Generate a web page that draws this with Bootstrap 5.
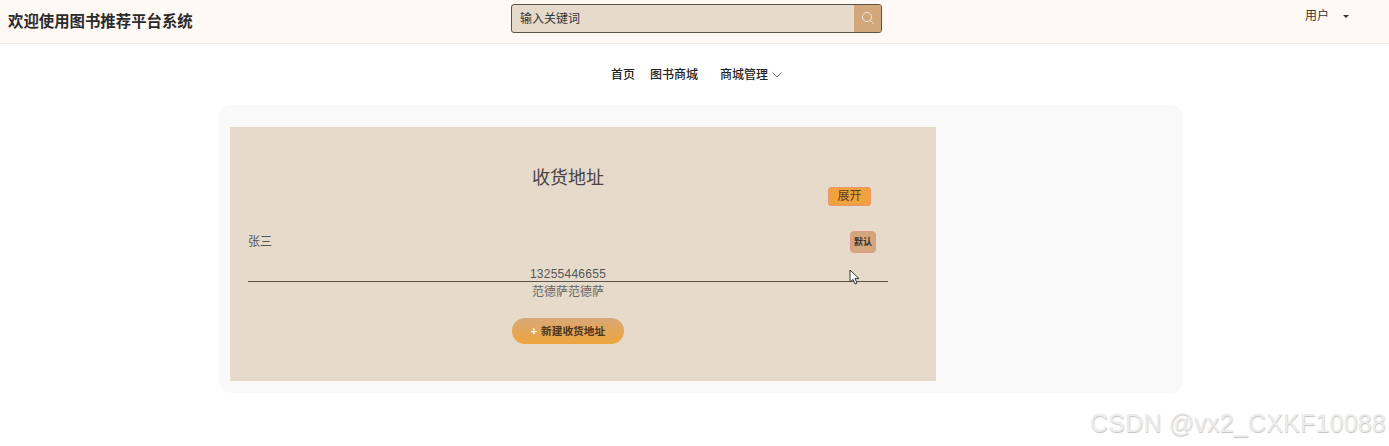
<!DOCTYPE html>
<html lang="zh-CN">
<head>
    <meta charset="UTF-8">
    <meta name="viewport" content="width=device-width, initial-scale=1.0">
    <title>图书推荐平台</title>
    <link href="https://cdn.jsdelivr.net/npm/bootstrap@5.3.0/dist/css/bootstrap.min.css" rel="stylesheet">
    <style>
        html, body { height: 446px; overflow: hidden; }
        body { font-family: "Liberation Sans", "Noto Sans CJK SC", sans-serif; background: #fff; color: #333; position: relative; }
        .top-bar { height: 44px; background: #fff9f6; border-bottom: 1px solid #e9e9e9; padding: 0 8px; }
        .site-title { font-size: 15.4px; font-weight: 700; width: 503px; color: #2b2b2b; }
        .search-box { width: 371px; height: 29px; margin-top: -7px; border: 1px solid #5d5348; border-radius: 3px; background: #e6dacb; overflow: hidden; }
        .search-text { font-size: 12px; padding: 2px 0 0 8px; color: #333; }
        .search-btn { width: 27px; background: #d3a77c; }
        .user-menu { margin-left: 423px; margin-top: -11px; font-size: 12px; color: #333; }
        .user-caret { border-top: 3px solid #333; border-left: 3px solid transparent; border-right: 3px solid transparent; margin-left: 14px; margin-top: 1px; }
        .main-nav { height: 61px; font-size: 12px; color: #222; padding-left: 4px; gap: 15px; }
        .nav-entry { font-weight: 500; }
        .nav-entry-wide { margin-left: 7px; margin-right: -11px; }
        .panel-wrap { width: 964px; height: 287.5px; margin-left: 219px; background: #f9f9f9; border-radius: 12px; padding: 22px 11px 12px; }
        .addr-box { width: 706px; height: 253.5px; background: #e6dacb; padding: 0 18px; }
        .addr-col { width: 640px; }
        .addr-title { font-size: 18px; line-height: 26px; padding-top: 38px; height: 63px; color: #4a4440; font-weight: 400; margin: 0; text-align: center; }
        .expand-btn { width: 43px; height: 19px; background: #f0a23c; border: 1px solid #ee9470; border-radius: 3px; font-size: 12px; line-height: 17px; color: #5a4020; margin-left: 580px; margin-top: -3px; }
        .name-row { height: 21px; margin-top: 25px; font-size: 12px; color: #555; }
        .default-tag { width: 26px; height: 22px; background: #d3a77c; border: 1px solid #e8968a; border-radius: 4px; font-size: 9px; font-weight: 700; line-height: 20px; color: #333; margin-right: 12px; }
        .phone-line { font-size: 12px; line-height: 22px; height: 19px; margin-top: 11px; border-bottom: 1px solid #5d5348; color: #555; letter-spacing: .25px; }
        .addr-line { font-size: 12px; line-height: 20px; color: #666; }
        .new-btn { width: 112px; height: 26px; margin: 16px auto 0; border-radius: 13px; background: linear-gradient(180deg, #d9a878, #eda43c); font-size: 10.7px; font-weight: 700; color: #4a3520; }
        .new-btn span:first-child { color: #fff; margin-right: 4px; }
        .cursor-mark { position: absolute; left: 849px; top: 269px; }
        .csdn-mark { position: absolute; left: 1090px; top: 409px; font-size: 25px; line-height: 28px; color: #ececec; letter-spacing: .2px; text-shadow: .5px .5px 1px #c4c4c4; }
    </style>
</head>
<body>
    <header class="top-bar d-flex align-items-center">
        <div class="site-title">欢迎使用图书推荐平台系统</div>
        <div class="search-box d-flex">
            <div class="search-text flex-grow-1 d-flex align-items-center">输入关键词</div>
            <div class="search-btn d-flex align-items-center justify-content-center">
                <svg width="14" height="14" viewBox="0 0 14 14" fill="none" stroke="#f1e3d3" stroke-width="1"><circle cx="6" cy="6" r="4.6"/><path d="M9.4 9.4 13 13"/></svg>
            </div>
        </div>
        <div class="user-menu d-flex align-items-center">
            <span>用户</span>
            <span class="user-caret"></span>
        </div>
    </header>

    <nav class="main-nav d-flex align-items-center justify-content-center">
        <span class="nav-entry">首页</span>
        <span class="nav-entry">图书商城</span>
        <span class="nav-entry nav-entry-wide">商城管理</span>
        <svg width="10" height="6" viewBox="0 0 10 6" fill="none" stroke="#777" stroke-width="1"><path d="M.5.5 5 5 9.5.5"/></svg>
    </nav>

    <section class="panel-wrap">
        <div class="addr-box">
            <div class="addr-col text-center">
                <h5 class="addr-title">收货地址</h5>
                <div class="expand-btn">展开</div>
                <div class="name-row d-flex justify-content-between align-items-center">
                    <span>张三</span>
                    <span class="default-tag">默认</span>
                </div>
                <div class="phone-line">13255446655</div>
                <div class="addr-line">范德萨范德萨</div>
                <div class="new-btn d-flex align-items-center justify-content-center"><span>+</span><span>新建收货地址</span></div>
            </div>
        </div>
    </section>

    <svg class="cursor-mark" width="12" height="17" viewBox="0 0 12 17"><path d="M1 1v12l3-2.6 2 4.6 2-.9-2-4.5h4z" fill="#fff" stroke="#333" stroke-width="1"/></svg>
    <div class="csdn-mark">CSDN @vx2_CXKF10088</div>
</body>
</html>
